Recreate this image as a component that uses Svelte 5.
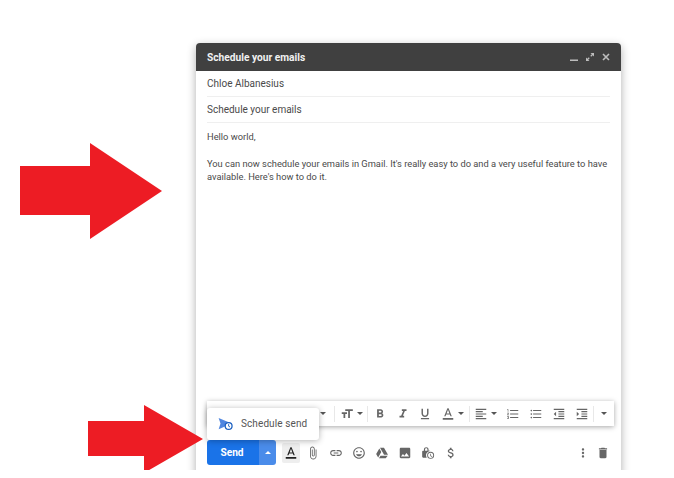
<script lang="ts">
  const icons: Record<string, string> = {
    size: 'M9 4v3h5v12h3V7h5V4H9zm-6 8h3v7h3v-7h3V9H3v3z',
    bold: 'M15.6 10.79c.97-.67 1.65-1.77 1.65-2.79 0-2.26-1.75-4-4-4H7v14h7.04c2.09 0 3.71-1.7 3.71-3.79 0-1.52-.86-2.82-2.15-3.42zM10 6.5h3c.83 0 1.5.67 1.5 1.5s-.67 1.5-1.5 1.5h-3v-3zm3.5 9H10v-3h3.5c.83 0 1.5.67 1.5 1.5s-.67 1.5-1.5 1.5z',
    italic: 'M10 4v3h2.21l-3.42 8H6v3h8v-3h-2.21l3.42-8H18V4z',
    underline: 'M12 17c3.31 0 6-2.69 6-6V3h-2.5v8c0 1.93-1.57 3.5-3.5 3.5S8.5 12.93 8.5 11V3H6v8c0 3.31 2.69 6 6 6zm-7 2v2h14v-2H5z',
    color: 'M11 2L5.5 16h2.25l1.12-3h6.25l1.12 3h2.25L13 2h-2zm-1.38 9L12 4.67 14.38 11H9.62zM3 19h18v3H3z',
    align: 'M15 15H3v2h12v-2zm0-8H3v2h12V7zM3 13h18v-2H3v2zm0 8h18v-2H3v2zM3 3v2h18V3H3z',
    numbered: 'M2 17h2v.5H3v1h1v.5H2v1h3v-4H2v1zm1-9h1V4H2v1h1v3zm-1 3h1.8L2 13.1v.9h3v-1H3.2L5 10.9V10H2v1zm5-6v2h14V5H7zm0 14h14v-2H7v2zm0-6h14v-2H7v2z',
    bullets: 'M4 10.5c-.83 0-1.5.67-1.5 1.5s.67 1.5 1.5 1.5 1.5-.67 1.5-1.5-.67-1.5-1.5-1.5zm0-6c-.83 0-1.5.67-1.5 1.5S3.17 7.5 4 7.5 5.5 6.83 5.5 6 4.83 4.5 4 4.5zm0 12c-.83 0-1.5.68-1.5 1.5s.68 1.5 1.5 1.5 1.5-.68 1.5-1.5-.67-1.5-1.5-1.5zM7 19h14v-2H7v2zm0-6h14v-2H7v2zm0-8v2h14V5H7z',
    outdent: 'M11 17h10v-2H11v2zm-8-5l4 4V8l-4 4zm0 9h18v-2H3v2zM3 3v2h18V3H3zm8 6h10V7H11v2zm0 4h10v-2H11v2z',
    indent: 'M3 21h18v-2H3v2zM3 8v8l4-4-4-4zm8 9h10v-2H11v2zM3 3v2h18V3H3zm8 6h10V7H11v2zm0 4h10v-2H11v2z',
    attach: 'M16.5 6v11.5c0 2.21-1.79 4-4 4s-4-1.79-4-4V5c0-1.38 1.12-2.5 2.5-2.5s2.5 1.12 2.5 2.5v10.5c0 .55-.45 1-1 1s-1-.45-1-1V6H10v9.5c0 1.38 1.12 2.5 2.5 2.5s2.5-1.12 2.5-2.5V5c0-2.21-1.79-4-4-4S7 2.79 7 5v12.5c0 3.04 2.46 5.5 5.5 5.5s5.5-2.46 5.5-5.5V6h-1.5z',
    link: 'M3.9 12c0-1.71 1.39-3.1 3.1-3.1h4V7H7c-2.76 0-5 2.24-5 5s2.24 5 5 5h4v-1.9H7c-1.71 0-3.1-1.39-3.1-3.1zM8 13h8v-2H8v2zm9-6h-4v1.9h4c1.71 0 3.1 1.39 3.1 3.1s-1.39 3.1-3.1 3.1h-4V17h4c2.76 0 5-2.24 5-5s-2.24-5-5-5z',
    emoji: 'M11.99 2C6.47 2 2 6.48 2 12s4.47 10 9.99 10C17.52 22 22 17.52 22 12S17.52 2 11.99 2zM12 20c-4.42 0-8-3.58-8-8s3.58-8 8-8 8 3.58 8 8-3.58 8-8 8zm3.5-9c.83 0 1.5-.67 1.5-1.5S16.33 8 15.5 8 14 8.67 14 9.5s.67 1.5 1.5 1.5zm-7 0c.83 0 1.5-.67 1.5-1.5S9.33 8 8.5 8 7 8.67 7 9.5 7.67 11 8.5 11zm3.5 6.5c2.33 0 4.31-1.46 5.11-3.5H6.89c.8 2.04 2.78 3.5 5.11 3.5z',
    drive: 'M8.6 3h6.8l6.9 12h-6.8zM7.4 4.2l3.4 5.9-5.4 9.7L2 13.9zM9.4 16.5h12.4L18.4 21H6.8z',
    image: 'M21 19V5c0-1.1-.9-2-2-2H5c-1.1 0-2 .9-2 2v14c0 1.1.9 2 2 2h14c1.1 0 2-.9 2-2zM8.5 13.5l2.5 3.01L14.5 12l4.5 6H5l3.5-4.5z',
    confidential: 'M16.5 22a6 6 0 1 1 0-12 6 6 0 0 1 0 12zm0-1.6a4.4 4.4 0 1 0 0-8.8 4.4 4.4 0 0 0 0 8.8zm-.6-7h1.2v3l2.3 1.4-.6 1-2.9-1.7zM3.5 8H5V6c0-2.5 1.9-4 4-4s4 1.5 4 4v2h1.5c.5 0 1 .2 1.3.5a7.5 7.5 0 0 0-6 11.5H3.5c-.8 0-1.5-.7-1.5-1.5v-9C2 8.7 2.7 8 3.5 8zM7 8h4V6c0-1.3-.9-2.2-2-2.2S7 4.7 7 6z',
    dollar: 'M11.8 10.9c-2.27-.59-3-1.2-3-2.15 0-1.09 1.01-1.85 2.7-1.85 1.78 0 2.44.85 2.5 2.1h2.21c-.07-1.72-1.12-3.3-3.21-3.81V3h-3v2.16c-1.94.42-3.5 1.68-3.5 3.61 0 2.31 1.91 3.46 4.7 4.13 2.5.6 3 1.48 3 2.41 0 .69-.49 1.79-2.7 1.79-2.06 0-2.87-.92-2.98-2.1h-2.2c.12 2.19 1.76 3.42 3.68 3.83V21h3v-2.15c1.95-.37 3.5-1.5 3.5-3.55 0-2.84-2.43-3.81-4.7-4.4z',
    more: 'M12 8c1.1 0 2-.9 2-2s-.9-2-2-2-2 .9-2 2 .9 2 2 2zm0 2c-1.1 0-2 .9-2 2s.9 2 2 2 2-.9 2-2-.9-2-2-2zm0 6c-1.1 0-2 .9-2 2s.9 2 2 2 2-.9 2-2-.9-2-2-2z',
    trash: 'M6 19c0 1.1.9 2 2 2h8c1.1 0 2-.9 2-2V7H6v12zM19 4h-3.5l-1-1h-5l-1 1H5v2h14V4z',
  };

  const formatting = [
    { group: [{ name: 'size', caret: true }] },
    { group: [{ name: 'bold' }, { name: 'italic' }, { name: 'underline' }, { name: 'color', caret: true }] },
    { group: [{ name: 'align', caret: true }, { name: 'numbered' }, { name: 'bullets' }, { name: 'outdent' }, { name: 'indent' }] },
  ];

  const actions = ['attach', 'link', 'emoji', 'drive', 'image', 'confidential', 'dollar'];
</script>

{#snippet arrow(cls: string, w: number, h: number, points: string)}
  <svg class="arrow {cls}" width={w} height={h} viewBox="0 0 {w} {h}"><polygon {points} /></svg>
{/snippet}

{#snippet icon(name: string, cls = '')}
  <svg class="icon {cls}" viewBox="0 0 24 24"><path d={icons[name]} /></svg>
{/snippet}

<div class="stage">
  <div class="compose">
    <header class="titlebar">
      <span>Schedule your emails</span>
      <div class="window-controls">
        <svg viewBox="0 0 10 10"><rect x="1" y="7.5" width="8" height="1.5" /></svg>
        <svg viewBox="0 0 10 10"><path d="M5.5 1H9v3.5L7.7 3.2 6.2 4.7l-.9-.9 1.500-1.500zM4.500 9H1V5.500l1.300 1.300 1.500-1.500.9.9-1.500 1.500z" /></svg>
        <svg viewBox="0 0 10 10"><path d="M2 2l6 6M8 2L2 8" class="close" /></svg>
      </div>
    </header>

    <div class="fields">
      <div class="field">Chloe Albanesius</div>
      <div class="field">Schedule your emails</div>
    </div>

    <div class="body">
      <p>Hello world,</p>
      <p>You can now schedule your emails in Gmail. It's really easy to do and a very useful feature to have available. Here's how to do it.</p>
    </div>

    <div class="format-bar">
      <span class="tool font-size"><i class="caret"></i></span>
      {#each formatting as section}
        <span class="sep"></span>
        {#each section.group as item}
          <span class="tool" class:wide={item.caret}>
            {@render icon(item.name)}
            {#if item.caret}<i class="caret"></i>{/if}
          </span>
        {/each}
      {/each}
      <span class="sep"></span>
      <span class="tool last"><i class="caret"></i></span>
    </div>

    <div class="action-row">
      <div class="send">
        <span class="send-label">Send</span>
        <span class="send-more"><i class="caret up"></i></span>
      </div>
      <span class="text-toggle">{@render icon('color', 'dark')}</span>
      <div class="actions">
        {#each actions as name}
          <span class="action">{@render icon(name)}</span>
        {/each}
      </div>
      <div class="right-actions">
        <span class="action">{@render icon('more')}</span>
        <span class="action">{@render icon('trash')}</span>
      </div>
    </div>

    <div class="schedule-menu">
      <svg class="schedule-icon" viewBox="0 0 24 24">
        <path class="plane" d="M1 3l21 9-21 9 3-9z" />
        <circle cx="17" cy="16" r="5.5" class="clock" />
        <path class="hands" d="M17 13v3.300l2.200 1.300" />
      </svg>
      <span>Schedule send</span>
    </div>
  </div>

  {@render arrow('arrow-top', 142, 96, '0,23 70,23 70,0 142,48 70,96 70,72 0,72')}
  {@render arrow('arrow-bottom', 115, 70, '0,16 56,16 56,0 115,34 56,68 56,51 0,51')}
</div>

<style>
  :global(body) {
    background: #fff;
  }

  .stage {
    position: relative;
    box-sizing: border-box;
    width: 674px;
    height: 470px;
    padding: 43px 53px 0 196px;
    overflow: hidden;
    background: #fff;
    font-family: Roboto, "Liberation Sans", sans-serif;
  }

  .arrow {
    position: absolute;
    fill: #ed1c24;
  }

  .arrow-top {
    left: 20px;
    top: 143px;
  }

  .arrow-bottom {
    left: 88px;
    top: 405px;
  }

  .compose {
    position: relative;
    display: flex;
    flex-direction: column;
    height: 433px;
    border-radius: 4px 4px 0 0;
    background: #fff;
    box-shadow: 0 3px 10px rgba(0, 0, 0, 0.32);
  }

  .titlebar {
    display: flex;
    align-items: center;
    justify-content: space-between;
    height: 28px;
    padding: 0 10px 0 11px;
    border-radius: 4px 4px 0 0;
    background: #404040;
    color: #f1f1f1;
    font-size: 10.2px;
    font-weight: 700;
  }

  .window-controls {
    display: flex;
    gap: 6px;
  }

  .window-controls svg {
    width: 10px;
    height: 10px;
    fill: #bdbdbd;
  }

  .close {
    fill: none;
    stroke: #bdbdbd;
    stroke-width: 1.6;
  }

  .fields {
    padding: 0 11px;
  }

  .field {
    display: flex;
    align-items: center;
    height: 25px;
    border-bottom: 1px solid #efefef;
    color: #4a4a4a;
    font-size: 10px;
  }

  .body {
    flex: 1;
    padding: 7px 11px 0;
    color: #4a4a4a;
    font-size: 9.3px;
    line-height: 13px;
  }

  .body p {
    margin: 0 0 14px;
  }

  .format-bar {
    display: flex;
    align-items: center;
    justify-content: flex-end;
    height: 25px;
    margin: 0 7px 0 11px;
    background: #fff;
    box-shadow: 0 1px 5px rgba(0, 0, 0, 0.35);
  }

  .tool {
    display: flex;
    align-items: center;
    justify-content: center;
    width: 22.8px;
    height: 25px;
  }

  .tool.wide {
    width: 32px;
  }

  .tool.last {
    width: 20px;
  }

  .sep {
    width: 1px;
    height: 16px;
    background: #e8e8e8;
  }

  .icon {
    flex: none;
    width: 14px;
    height: 14px;
    fill: #666;
  }

  .icon.dark {
    fill: #222;
  }

  .caret {
    flex: none;
    width: 0;
    height: 0;
    margin-left: 3px;
    border-left: 3px solid transparent;
    border-right: 3px solid transparent;
    border-top: 3px solid #555;
  }

  .tool.last .caret,
  .tool.font-size .caret {
    margin-left: 0;
  }

  .caret.up {
    margin: 0;
    border-top: 0;
    border-bottom: 3px solid #fff;
  }

  .action-row {
    display: flex;
    align-items: center;
    height: 25px;
    margin: 14px 8px 11px 11px;
  }

  .send {
    display: flex;
    height: 25px;
    border-radius: 3px;
    overflow: hidden;
    color: #fff;
    font-size: 10.2px;
    font-weight: 700;
  }

  .send-label {
    display: flex;
    align-items: center;
    justify-content: center;
    width: 52px;
    padding-right: 2px;
    box-sizing: border-box;
    background: #1a73e8;
  }

  .send-more {
    display: flex;
    align-items: center;
    justify-content: center;
    width: 17px;
    background: #4a8cea;
  }

  .text-toggle {
    display: flex;
    align-items: center;
    justify-content: center;
    width: 18px;
    height: 20px;
    margin-left: 6px;
    border-radius: 2px;
    background: #eee;
  }

  .actions {
    display: flex;
    margin-left: 1px;
  }

  .action {
    display: flex;
    align-items: center;
    justify-content: center;
    width: 23px;
    height: 25px;
  }

  .right-actions {
    display: flex;
    margin-left: auto;
  }

  .right-actions .action {
    width: 20px;
  }

  .schedule-menu {
    position: absolute;
    left: 11px;
    bottom: 36px;
    display: flex;
    align-items: center;
    gap: 8px;
    width: 112px;
    height: 32px;
    box-sizing: border-box;
    padding: 0 0 1px 11px;
    border-radius: 3px;
    background: #fff;
    box-shadow: 0 1px 6px rgba(0, 0, 0, 0.3);
    color: #555;
    font-size: 10px;
    letter-spacing: 0.1px;
  }

  .schedule-icon {
    width: 15px;
    height: 15px;
  }

  .plane {
    fill: #4f86e0;
  }

  .clock {
    fill: #fff;
    stroke: #1a5fc0;
    stroke-width: 2;
  }

  .hands {
    fill: none;
    stroke: #1a5fc0;
    stroke-width: 1.5;
  }
</style>
